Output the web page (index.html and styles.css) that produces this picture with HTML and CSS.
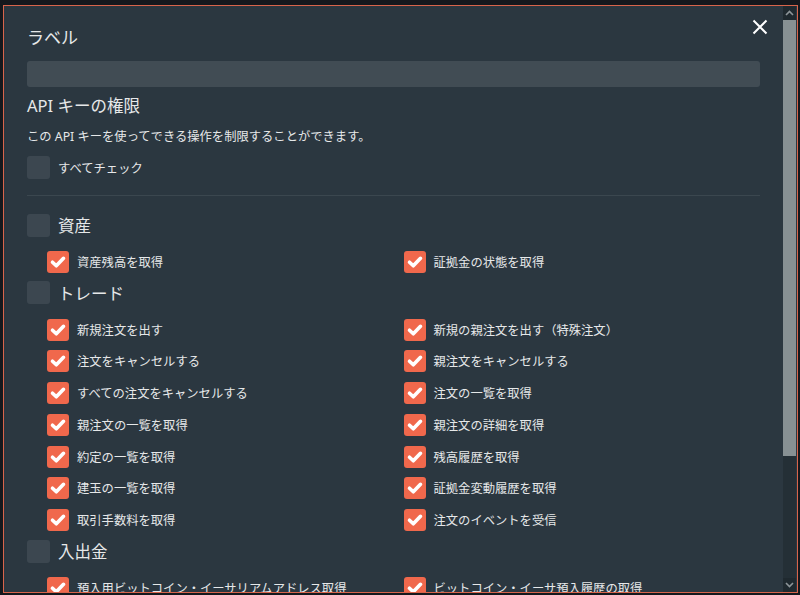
FILE: index.html
```html
<!DOCTYPE html>
<html lang="ja">
<head>
<meta charset="utf-8">
<title>API キー</title>
<link rel="stylesheet" href="styles.css">
</head>
<body>
<div class="backdrop">
  <div class="modal">
    <div class="content">
      <button class="close" aria-label="close">
        <svg width="16" height="16" viewBox="0 0 16 16"><path d="M1.5 1.5 L14.5 14.5 M14.5 1.5 L1.5 14.5" stroke="#ffffff" stroke-width="2" fill="none"/></svg>
      </button>
      <div class="title">ラベル</div>
      <div class="input"></div>
      <div class="subtitle">API キーの権限</div>
      <p class="desc">この API キーを使ってできる操作を制限することができます。</p>
      <label class="row all"><span class="box"></span><span class="small">すべてチェック</span></label>
      <div class="sep"></div>

      <div class="group">
        <label class="row head"><span class="box"></span><span class="big">資産</span></label>
        <div class="items">
          <label class="item"><span class="cb"><svg viewBox="0 0 22 22"><path d="M5.5 11.2 L9.3 14.8 L16.5 7.3" /></svg></span>資産残高を取得</label>
          <label class="item"><span class="cb"><svg viewBox="0 0 22 22"><path d="M5.5 11.2 L9.3 14.8 L16.5 7.3" /></svg></span>証拠金の状態を取得</label>
        </div>
      </div>

      <div class="group">
        <label class="row head"><span class="box"></span><span class="big">トレード</span></label>
        <div class="items">
          <label class="item"><span class="cb"><svg viewBox="0 0 22 22"><path d="M5.5 11.2 L9.3 14.8 L16.5 7.3" /></svg></span>新規注文を出す</label>
          <label class="item"><span class="cb"><svg viewBox="0 0 22 22"><path d="M5.5 11.2 L9.3 14.8 L16.5 7.3" /></svg></span>新規の親注文を出す（特殊注文）</label>
          <label class="item"><span class="cb"><svg viewBox="0 0 22 22"><path d="M5.5 11.2 L9.3 14.8 L16.5 7.3" /></svg></span>注文をキャンセルする</label>
          <label class="item"><span class="cb"><svg viewBox="0 0 22 22"><path d="M5.5 11.2 L9.3 14.8 L16.5 7.3" /></svg></span>親注文をキャンセルする</label>
          <label class="item"><span class="cb"><svg viewBox="0 0 22 22"><path d="M5.5 11.2 L9.3 14.8 L16.5 7.3" /></svg></span>すべての注文をキャンセルする</label>
          <label class="item"><span class="cb"><svg viewBox="0 0 22 22"><path d="M5.5 11.2 L9.3 14.8 L16.5 7.3" /></svg></span>注文の一覧を取得</label>
          <label class="item"><span class="cb"><svg viewBox="0 0 22 22"><path d="M5.5 11.2 L9.3 14.8 L16.5 7.3" /></svg></span>親注文の一覧を取得</label>
          <label class="item"><span class="cb"><svg viewBox="0 0 22 22"><path d="M5.5 11.2 L9.3 14.8 L16.5 7.3" /></svg></span>親注文の詳細を取得</label>
          <label class="item"><span class="cb"><svg viewBox="0 0 22 22"><path d="M5.5 11.2 L9.3 14.8 L16.5 7.3" /></svg></span>約定の一覧を取得</label>
          <label class="item"><span class="cb"><svg viewBox="0 0 22 22"><path d="M5.5 11.2 L9.3 14.8 L16.5 7.3" /></svg></span>残高履歴を取得</label>
          <label class="item"><span class="cb"><svg viewBox="0 0 22 22"><path d="M5.5 11.2 L9.3 14.8 L16.5 7.3" /></svg></span>建玉の一覧を取得</label>
          <label class="item"><span class="cb"><svg viewBox="0 0 22 22"><path d="M5.5 11.2 L9.3 14.8 L16.5 7.3" /></svg></span>証拠金変動履歴を取得</label>
          <label class="item"><span class="cb"><svg viewBox="0 0 22 22"><path d="M5.5 11.2 L9.3 14.8 L16.5 7.3" /></svg></span>取引手数料を取得</label>
          <label class="item"><span class="cb"><svg viewBox="0 0 22 22"><path d="M5.5 11.2 L9.3 14.8 L16.5 7.3" /></svg></span>注文のイベントを受信</label>
        </div>
      </div>

      <div class="group">
        <label class="row head"><span class="box"></span><span class="big">入出金</span></label>
        <div class="items">
          <label class="item"><span class="cb"><svg viewBox="0 0 22 22"><path d="M5.5 11.2 L9.3 14.8 L16.5 7.3" /></svg></span>預入用ビットコイン・イーサリアムアドレス取得</label>
          <label class="item"><span class="cb"><svg viewBox="0 0 22 22"><path d="M5.5 11.2 L9.3 14.8 L16.5 7.3" /></svg></span>ビットコイン・イーサ預入履歴の取得</label>
        </div>
      </div>
    </div>
    <div class="scrollbar">
      <div class="arrow up"><svg width="9" height="6" viewBox="0 0 9 6"><path d="M1 5 L4.5 1.5 L8 5" stroke="#8d9599" stroke-width="1.6" fill="none"/></svg></div>
      <div class="thumb"></div>
      <div class="track"></div>
      <div class="arrow down"><svg width="9" height="6" viewBox="0 0 9 6"><path d="M1 1 L4.5 4.5 L8 1" stroke="#8d9599" stroke-width="1.6" fill="none"/></svg></div>
    </div>
  </div>
</div>
</body>
</html>
```

FILE: styles.css
```css
html, body {
  margin: 0;
  padding: 0;
  width: 800px;
  height: 595px;
  overflow: hidden;
  background: #15181d;
  font-family: "Noto Sans", "Noto Sans CJK JP", sans-serif;
  color: #e6e8e9;
}

.backdrop {
  padding: 5px 2px 2px 3px;
  height: 595px;
  box-sizing: border-box;
  border-left: 1px solid #15181d;
}

.modal {
  display: flex;
  height: 588px;
  width: 795px;
  margin-left: -1px;
  box-sizing: border-box;
  border: 1px solid #d8644b;
  background: #2b3740;
  overflow: hidden;
}

.content {
  flex: 1;
  position: relative;
  padding: 20px 23px 0 23px;
  overflow: hidden;
}

.close {
  position: absolute;
  right: 15px;
  top: 13px;
  width: 16px;
  height: 16px;
  padding: 0;
  border: 0;
  background: none;
  display: flex;
}

.title {
  font-size: 17px;
  line-height: 24px;
}

.input {
  margin-top: 11px;
  height: 26px;
  background: #414c54;
  border-radius: 3px;
}

.subtitle {
  margin-top: 7px;
  font-size: 16.5px;
  line-height: 24px;
}

.desc {
  margin: 10px 0 0;
  font-size: 12.3px;
  line-height: 18px;
}

.row {
  display: flex;
  align-items: center;
  gap: 8px;
}

.all {
  margin-top: 10px;
  height: 23px;
}

.box {
  width: 23px;
  height: 23px;
  background: #3c4750;
  border-radius: 3px;
  flex: none;
}

.small {
  font-size: 12.3px;
}

.sep {
  margin-top: 16px;
  height: 1px;
  background: #3b474f;
  margin-bottom: 14px;
}

.head {
  height: 30px;
}

.big {
  font-size: 16.5px;
}

.items {
  margin-top: 6px;
  padding-left: 20px;
  display: grid;
  grid-template-columns: 1fr 1fr;
  grid-auto-rows: 31.75px;
}

.item {
  display: flex;
  align-items: center;
  gap: 8px;
  font-size: 12.3px;
  white-space: nowrap;
}

.cb {
  width: 22px;
  height: 22px;
  border-radius: 3px;
  background: #f0684c;
  flex: none;
  display: flex;
}

.cb svg {
  width: 22px;
  height: 22px;
}

.cb path {
  fill: none;
  stroke: #ffffff;
  stroke-width: 3.6;
  stroke-linecap: round;
  stroke-linejoin: round;
}

.scrollbar {
  width: 13px;
  flex: none;
  display: flex;
  flex-direction: column;
  background: #242f36;
  margin-right: 1px;
}

.arrow {
  height: 14px;
  display: flex;
  align-items: center;
  justify-content: center;
  background: #1f292f;
}

.thumb {
  height: 436px;
  background: #879093;
}

.track {
  flex: 1;
}
```
